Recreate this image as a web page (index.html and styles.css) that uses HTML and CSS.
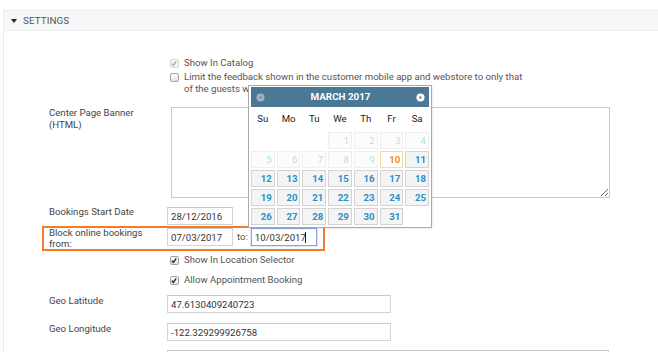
FILE: index.html
```html
<!DOCTYPE html>
<html lang="en">
<head>
    <meta charset="UTF-8">
    <meta name="viewport" content="width=device-width, initial-scale=1.0">
    <title>Location Settings</title>
    <link rel="stylesheet" href="styles.css">
</head>
<body>

    <div class="panel">
        <div class="panel-heading"><span class="caret"></span>SETTINGS</div>
        <div class="panel-body">

            <div class="row row-first">
                <div class="label"></div>
                <div class="field field-check">
                    <label class="check disabled">
                        <span class="cb"><svg viewBox="0 0 10 10"><path d="M2.2 5.2 L4.2 7.4 L7.8 2.4"/></svg></span>
                        <span>Show In Catalog</span>
                    </label>
                </div>
            </div>

            <div class="row row-limit">
                <div class="label"></div>
                <div class="field field-check">
                    <label class="check">
                        <span class="cb"></span>
                        <span class="check-text">Limit the feedback shown in the customer mobile app and webstore to only that of the guests who visited</span>
                    </label>
                </div>
            </div>

            <div class="row row-banner">
                <div class="label">Center Page Banner (HTML)</div>
                <div class="field">
                    <textarea class="banner"></textarea>
                </div>
            </div>

            <div class="row row-start">
                <div class="label">Bookings Start Date</div>
                <div class="field">
                    <input type="text" class="date" value="28/12/2016">
                </div>
            </div>

            <div class="row row-block highlight">
                <div class="label">Block online bookings from:</div>
                <div class="field">
                    <input type="text" class="date" value="07/03/2017">
                    <span class="to">to:</span>
                    <span class="focus-wrap"><input type="text" class="date focused" value="10/03/2017"></span>
                </div>
            </div>

            <div class="row row-cb1">
                <div class="label"></div>
                <div class="field field-check">
                    <label class="check">
                        <span class="cb"><svg viewBox="0 0 10 10"><path d="M2.2 5.2 L4.2 7.4 L7.8 2.4"/></svg></span>
                        <span>Show In Location Selector</span>
                    </label>
                </div>
            </div>

            <div class="row row-cb2">
                <div class="label"></div>
                <div class="field field-check">
                    <label class="check">
                        <span class="cb"><svg viewBox="0 0 10 10"><path d="M2.2 5.2 L4.2 7.4 L7.8 2.4"/></svg></span>
                        <span>Allow Appointment Booking</span>
                    </label>
                </div>
            </div>

            <div class="row row-lat">
                <div class="label">Geo Latitude</div>
                <div class="field">
                    <input type="text" class="geo" value="47.6130409240723">
                </div>
            </div>

            <div class="row row-lng">
                <div class="label">Geo Longitude</div>
                <div class="field">
                    <input type="text" class="geo" value="-122.329299926758">
                </div>
            </div>

            <div class="row row-next">
                <div class="label">Description</div>
                <div class="field">
                    <input type="text" class="wide" value="">
                </div>
            </div>

        </div>
    </div>

    <div class="datepicker">
        <div class="dp-header">
            <span class="dp-prev"><svg viewBox="0 0 10 10"><circle cx="5" cy="5" r="4.5"/><path d="M6 3 L3.6 5 L6 7 Z"/></svg></span>
            <span class="dp-title">MARCH 2017</span>
            <span class="dp-next"><svg viewBox="0 0 10 10"><circle cx="5" cy="5" r="4.5"/><path d="M4 3 L6.4 5 L4 7 Z"/></svg></span>
        </div>
        <div class="dp-days">
            <span>Su</span><span>Mo</span><span>Tu</span><span>We</span><span>Th</span><span>Fr</span><span>Sa</span>
        </div>
        <div class="dp-grid">
            <span class="empty"></span><span class="empty"></span><span class="empty"></span>
            <span class="off">1</span><span class="off">2</span><span class="off">3</span><span class="off">4</span>
            <span class="off">5</span><span class="off">6</span><span class="off">7</span><span class="off">8</span><span class="off">9</span>
            <span class="today">10</span><span>11</span>
            <span>12</span><span>13</span><span>14</span><span>15</span><span>16</span><span>17</span><span>18</span>
            <span>19</span><span>20</span><span>21</span><span>22</span><span>23</span><span>24</span><span>25</span>
            <span>26</span><span>27</span><span>28</span><span>29</span><span>30</span><span>31</span>
            <span class="empty"></span>
        </div>
    </div>

</body>
</html>
```

FILE: styles.css
```css
body {
    margin: 0;
    font-family: Roboto, "Liberation Sans", Arial, sans-serif;
    font-size: 9.6px;
    line-height: 12px;
    color: #444;
    background: #fff;
    overflow: hidden;
}

.panel {
    margin: 10px 0 0 3px;
    border-left: 1px solid #ececec;
    border-top: 1px solid #ececec;
    height: 400px;
}

.panel-heading {
    display: flex;
    align-items: center;
    height: 19px;
    padding-left: 7px;
    background: #f7f7f7;
    border-bottom: 1px solid #f1f1f1;
    color: #555;
    font-size: 9.8px;
    letter-spacing: 0.1px;
}

.caret {
    width: 0;
    height: 0;
    border-left: 3px solid transparent;
    border-right: 3px solid transparent;
    border-top: 4px solid #222;
    margin-right: 6px;
    margin-top: 1px;
}

.panel-body {
    padding-top: 26px;
}

.row {
    display: flex;
    align-items: flex-start;
    padding-left: 45px;
}

.label {
    width: 104px;
    padding-right: 14px;
    flex-shrink: 0;
    color: #444;
}

.field {
    display: flex;
    align-items: center;
}

.field-check {
    padding-left: 3px;
}

.check {
    display: flex;
    align-items: flex-start;
    color: #555;
}

.check-text {
    width: 348px;
}

.cb {
    width: 7px;
    height: 7px;
    margin: 2px 5px 0 0;
    border: 1px solid #a3a3a3;
    border-radius: 2px;
    background: linear-gradient(#fdfdfd, #e4e4e4);
    flex-shrink: 0;
    display: flex;
}

.cb svg {
    width: 9px;
    height: 9px;
    margin: -1px 0 0 -1px;
}

.cb path {
    fill: none;
    stroke: #222;
    stroke-width: 1.7;
}

.check.disabled .cb {
    border-color: #d6d6d6;
    background: #f3f3f3;
}

.check.disabled .cb path {
    stroke: #aaa;
}

input, textarea {
    font-family: Roboto, "Liberation Sans", Arial, sans-serif;
    font-size: 9.6px;
    color: #333;
    box-sizing: border-box;
    border: 1px solid #d4d4d4;
    border-top-color: #c8c8c8;
    margin: 0;
    outline: none;
    background: #fff;
}

input {
    height: 18px;
    padding: 0 3px;
}

.date {
    width: 66px;
}

.geo {
    width: 224px;
}

.wide {
    width: 442px;
}

.banner {
    width: 439px;
    height: 91px;
    margin-left: 4px;
    border: 1px solid #c9c9c9;
    resize: both;
}

.to {
    margin: 0 3px 0 4px;
    color: #555;
}

.focus-wrap {
    position: relative;
    display: flex;
}

.focused {
    border-color: #86a9dc;
    box-shadow: 0 0 0 1px #dce7f7;
}

.focus-wrap::after {
    content: "";
    position: absolute;
    left: 54px;
    top: 4px;
    width: 1px;
    height: 11px;
    background: #111;
}

/* row spacing */
.row-first { margin-top: 0; }
.row-limit { margin-top: 2px; }
.row-banner { margin-top: 12px; }
.row-start { margin-top: 9px; }
.row-start .label { margin-top: -1px; }
.row-cb1 { margin-top: 3px; }
.row-cb2 { margin-top: 8px; }
.row-lat { margin-top: 9px; }
.row-lng { margin-top: 10px; }
.row-next { margin-top: 9px; }

.highlight {
    display: inline-flex;
    margin: 1px 0 0 38px;
    padding: 0 6px 0 5px;
    border: 2px solid #f57b29;
}

.highlight .label {
    line-height: 11px;
    margin-top: -1px;
}

/* datepicker */
.datepicker {
    position: absolute;
    left: 248px;
    top: 85px;
    width: 178px;
    height: 138px;
    padding: 1px 2px 2px;
    border: 1px solid #a9a9a9;
    background: #fff;
    box-shadow: 1px 1px 2px rgba(0, 0, 0, 0.08);
}

.dp-header {
    display: flex;
    align-items: center;
    justify-content: space-between;
    height: 20px;
    padding: 0 4px 0 5px;
    background: #4a7895;
}

.dp-title {
    color: #fff;
    font-weight: bold;
    font-size: 9.8px;
}

.dp-prev svg, .dp-next svg {
    width: 9px;
    height: 9px;
    display: block;
}

.dp-prev circle { fill: #9db3c2; }
.dp-prev path { fill: #5e86a0; }
.dp-next circle { fill: #fff; }
.dp-next path { fill: #3b5f75; }

.dp-days {
    display: grid;
    grid-template-columns: repeat(7, 1fr);
    column-gap: 2px;
    height: 25px;
    line-height: 24px;
    text-align: center;
    color: #222;
}

.dp-grid {
    display: grid;
    grid-template-columns: repeat(7, 1fr);
    grid-auto-rows: 17px;
    gap: 2px;
}

.dp-grid span {
    box-sizing: border-box;
    border: 1px solid #d3d3d3;
    background: #f4f4f4;
    color: #2b8fc4;
    font-weight: bold;
    text-align: right;
    padding-right: 2px;
    line-height: 15px;
}

.dp-grid .off {
    border-color: #efefef;
    background: #fcfcfc;
    color: #b9dcee;
    font-weight: normal;
}

.dp-grid .today {
    border-color: #f7dd8e;
    background: #fff;
    color: #eb8f16;
}

.dp-grid .empty {
    border: none;
    background: none;
}
```
